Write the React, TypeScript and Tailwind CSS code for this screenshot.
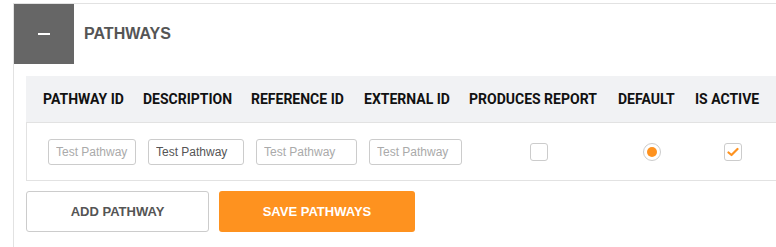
const cols = [
  { label: 'PATHWAY ID', w: 'w-[100px]' },
  { label: 'DESCRIPTION', w: 'w-[108px]' },
  { label: 'REFERENCE ID', w: 'w-[113px]' },
  { label: 'EXTERNAL ID', w: 'w-[105px]' },
  { label: 'PRODUCES REPORT', w: 'w-[149px]' },
  { label: 'DEFAULT', w: 'w-[77px]' },
  { label: 'IS ACTIVE', w: 'flex-1' },
];

function TextInput({ width, filled }: { width: string; filled?: boolean }) {
  return (
    <input
      type="text"
      readOnly
      value={filled ? 'Test Pathway' : undefined}
      placeholder={filled ? undefined : 'Test Pathway'}
      className={`${width} ml-[5px] h-[26px] rounded-[3px] border border-[#cccccc] bg-white pl-[7px] text-[12px] text-[#555555] placeholder:text-[#aaaaaa] outline-none`}
    />
  );
}

export default function App() {
  return (
    <div className="w-[776px] h-[247px] overflow-hidden bg-white pt-[3px] pl-[13px] font-['Liberation_Sans',Arial,sans-serif]">
      <div className="h-[260px] border-l border-t border-[#e2e2e2]">
        {/* Panel header */}
        <div className="flex items-center h-[60px]">
          <div className="w-[60px] h-[60px] bg-[#666666] flex items-center justify-center">
            <div className="w-[12px] h-[2px] bg-white" />
          </div>
          <h2 className="ml-[10px] text-[16px] font-bold text-[#555555]">PATHWAYS</h2>
        </div>

        <div className="pl-[12px] pt-[12px]">
          {/* Table */}
          <div className="flex h-[47px] bg-[#f1f2f4] border-b border-[#e2e2e2] pl-[17px] items-center">
            {cols.map((c) => (
              <div
                key={c.label}
                className={`${c.w} text-[14px] font-bold text-[#111111] whitespace-nowrap font-['Roboto',sans-serif]`}
              >
                {c.label}
              </div>
            ))}
          </div>
          <div className="flex h-[58px] items-center border-l border-b border-[#e2e2e2] pl-[16px]">
            <div className="w-[100px]"><TextInput width="w-[88px]" /></div>
            <div className="w-[108px]"><TextInput width="w-[96px]" filled /></div>
            <div className="w-[113px]"><TextInput width="w-[101px]" /></div>
            <div className="w-[105px]"><TextInput width="w-[93px]" /></div>
            <div className="w-[149px]">
              <div className="ml-[61px] w-[18px] h-[18px] rounded-[3px] border border-[#cccccc] bg-white" />
            </div>
            <div className="w-[77px]">
              <div className="ml-[25px] w-[18px] h-[18px] rounded-full border border-[#cccccc] bg-white flex items-center justify-center">
                <div className="w-[10px] h-[10px] rounded-full bg-[#fe921f]" />
              </div>
            </div>
            <div className="flex-1">
              <div className="ml-[29px] w-[18px] h-[18px] rounded-[3px] border border-[#cccccc] bg-white flex items-center justify-center">
                <svg width="12" height="10" viewBox="0 0 12 10">
                  <path d="M1.5 5.5 L4.5 8 L10.5 2" fill="none" stroke="#fe921f" strokeWidth="2.2" strokeLinecap="round" strokeLinejoin="round" />
                </svg>
              </div>
            </div>
          </div>

          {/* Actions */}
          <div className="flex gap-[10px] mt-[10px]">
            <button className="w-[183px] h-[41px] rounded-[3px] border border-[#cccccc] bg-white text-[13px] font-bold text-[#555555]">
              ADD PATHWAY
            </button>
            <button className="w-[196px] h-[41px] rounded-[3px] bg-[#fe921f] text-[13px] font-bold text-white">
              SAVE PATHWAYS
            </button>
          </div>
        </div>
      </div>
    </div>
  );
}
